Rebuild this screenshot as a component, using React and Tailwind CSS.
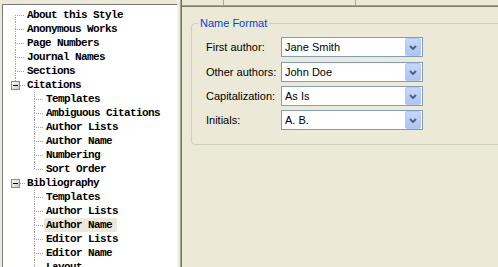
import React from 'react'

const tree = [
  { label: 'About this Style', level: 0, line: 'bottom' },
  { label: 'Anonymous Works', level: 0, line: 'full' },
  { label: 'Page Numbers', level: 0, line: 'full' },
  { label: 'Journal Names', level: 0, line: 'full' },
  { label: 'Sections', level: 0, line: 'full' },
  { label: 'Citations', level: 0, line: 'top', expander: true },
  { label: 'Templates', level: 1, line: 'full' },
  { label: 'Ambiguous Citations', level: 1, line: 'full' },
  { label: 'Author Lists', level: 1, line: 'full' },
  { label: 'Author Name', level: 1, line: 'full' },
  { label: 'Numbering', level: 1, line: 'full' },
  { label: 'Sort Order', level: 1, line: 'top' },
  { label: 'Bibliography', level: 0, line: 'none', expander: true },
  { label: 'Templates', level: 1, line: 'full' },
  { label: 'Author Lists', level: 1, line: 'full' },
  { label: 'Author Name', level: 1, line: 'full', selected: true },
  { label: 'Editor Lists', level: 1, line: 'full' },
  { label: 'Editor Name', level: 1, line: 'full' },
  { label: 'Layout', level: 1, line: 'full' },
]

const fields = [
  { label: 'First author:', value: 'Jane Smith' },
  { label: 'Other authors:', value: 'John Doe' },
  { label: 'Capitalization:', value: 'As Is' },
  { label: 'Initials:', value: 'A. B.' },
]

const dot = { stroke: '#a3a3a3', strokeWidth: 1, strokeDasharray: '1 1', shapeRendering: 'crispEdges' }

// dotted connector lines + expander box for one tree row
function Connector({ level, line, expander }) {
  const x = level === 0 ? 12.5 : 31.5
  const w = level === 0 ? 22 : 41
  const top = line === 'full' || line === 'top'
  const bottom = line === 'full' || line === 'bottom'
  return (
    <svg width={w} height="14" className="shrink-0">
      {top && <line x1={x} y1="0" x2={x} y2={expander ? 3 : 7.5} style={dot} />}
      {bottom && <line x1={x} y1="7" x2={x} y2="14" style={dot} />}
      <line x1={expander ? 17 : x + 1} y1="7.5" x2={w} y2="7.5" style={dot} />
      {expander && (
        <g shapeRendering="crispEdges">
          <defs>
            <linearGradient id="exp" x1="0" y1="0" x2="1" y2="1">
              <stop offset="0" stopColor="#ffffff" />
              <stop offset="1" stopColor="#c9c7ba" />
            </linearGradient>
          </defs>
          <rect x="8.5" y="3.5" width="8" height="8" fill="url(#exp)" stroke="#7c8ea4" />
          <line x1="10" y1="7.5" x2="15" y2="7.5" stroke="#000" />
        </g>
      )}
    </svg>
  )
}

function Combo({ value }) {
  return (
    <div className="flex items-center w-[142px] h-[20px] border border-[#7f9db9] bg-white">
      <span className="flex-1 pl-[3px] text-black">{value}</span>
      <div className="flex items-center justify-center w-[16px] h-[18px] mr-px rounded-[2px] border border-[#b4c8f2] bg-gradient-to-b from-[#c6d7fd] to-[#aec3f3]">
        <svg width="8" height="5" viewBox="0 0 8 5">
          <path d="M1 1 L4 4 L7 1" fill="none" stroke="#4d6185" strokeWidth="2" />
        </svg>
      </div>
    </div>
  )
}

export default function App() {
  return (
    <div className="flex w-[498px] h-[267px] overflow-hidden bg-[#ece9d8]">
      {/* tree */}
      <div className="w-[177px] shrink-0 pl-[2px] pt-[4px] h-full">
        <div className="h-full bg-white border-l border-t border-[#7b7b7b] pt-[3px] font-['Liberation_Mono',monospace] text-[11px] tracking-[-0.6px] font-bold leading-[14px] text-black overflow-hidden">
          {tree.map((row, i) => (
            <div key={i} className="flex h-[14px] whitespace-nowrap">
              <Connector {...row} />
              <span className={`pl-[2px] pr-[5px] ${row.selected ? 'bg-[#ece9d8]' : ''}`}>{row.label}</span>
            </div>
          ))}
        </div>
      </div>

      {/* splitter */}
      <div className="flex shrink-0 h-full">
        <div className="w-px bg-[#f8f7f1]" />
        <div className="w-[2px]" />
        <div className="w-px bg-[#a6a496]" />
        <div className="w-px bg-[#716f64]" />
      </div>

      {/* settings panel */}
      <div className="flex-1 flex flex-col min-w-0 font-['Liberation_Sans',Arial,sans-serif] text-[11px] text-black">
        <div className="flex h-[5px] shrink-0">
          <div className="w-[41px]" />
          <div className="w-px bg-[#aca899]" />
          <div className="w-[131px]" />
          <div className="w-px bg-[#aca899]" />
        </div>
        <div className="h-px bg-[#a5a393]" />
        <div className="h-px bg-[#7c7a6e]" />

        <fieldset className="ml-[9px] mt-[10px] w-[340px] shrink-0 rounded-[4px] border border-[#d0d0bf] pb-[14px]">
          <legend className="ml-[6px] px-[2px] leading-[13px] text-[#0046d5]">Name Format</legend>
          <div className="flex flex-col gap-[4px] pl-[14px] pt-[7px]">
            {fields.map((f, i) => (
              <div key={f.label} className={`flex items-center ${i === 0 ? 'mb-px' : ''}`}>
                <span className="w-[75px] shrink-0">{f.label}</span>
                <Combo value={f.value} />
              </div>
            ))}
          </div>
        </fieldset>
      </div>
    </div>
  )
}
